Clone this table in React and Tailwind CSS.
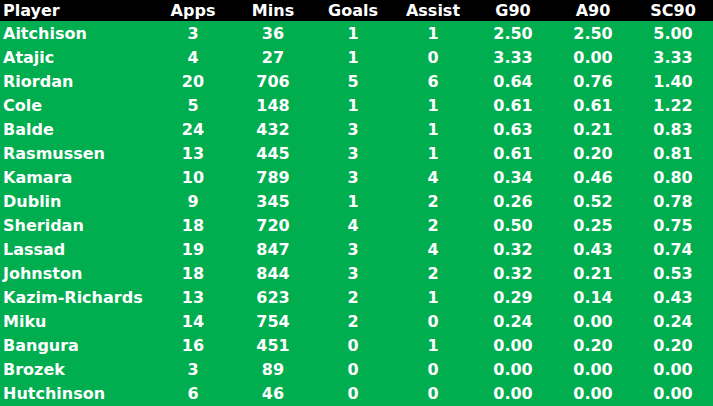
import React from 'react';

const rows = [
  ['Aitchison', 3, 36, 1, 1, '2.50', '2.50', '5.00'],
  ['Atajic', 4, 27, 1, 0, '3.33', '0.00', '3.33'],
  ['Riordan', 20, 706, 5, 6, '0.64', '0.76', '1.40'],
  ['Cole', 5, 148, 1, 1, '0.61', '0.61', '1.22'],
  ['Balde', 24, 432, 3, 1, '0.63', '0.21', '0.83'],
  ['Rasmussen', 13, 445, 3, 1, '0.61', '0.20', '0.81'],
  ['Kamara', 10, 789, 3, 4, '0.34', '0.46', '0.80'],
  ['Dublin', 9, 345, 1, 2, '0.26', '0.52', '0.78'],
  ['Sheridan', 18, 720, 4, 2, '0.50', '0.25', '0.75'],
  ['Lassad', 19, 847, 3, 4, '0.32', '0.43', '0.74'],
  ['Johnston', 18, 844, 3, 2, '0.32', '0.21', '0.53'],
  ['Kazim-Richards', 13, 623, 2, 1, '0.29', '0.14', '0.43'],
  ['Miku', 14, 754, 2, 0, '0.24', '0.00', '0.24'],
  ['Bangura', 16, 451, 0, 1, '0.00', '0.20', '0.20'],
  ['Brozek', 3, 89, 0, 0, '0.00', '0.00', '0.00'],
  ['Hutchinson', 6, 46, 0, 0, '0.00', '0.00', '0.00'],
];

const headers = ['Player', 'Apps', 'Mins', 'Goals', 'Assist', 'G90', 'A90', 'SC90'];

const Row = ({ cells, className }) => (
  <div className={`grid grid-cols-[153px_repeat(7,80px)] items-center ${className}`}>
    {cells.map((c, i) => (
      <div key={i} className={i === 0 ? 'pl-[3px] text-left' : 'text-center'}>
        {c}
      </div>
    ))}
  </div>
);

export default function App() {
  return (
    <div
      className="w-[713px] h-[406px] bg-[#00ad4f] text-white font-bold text-[16px] leading-none overflow-hidden"
      style={{ fontFamily: '"DejaVu Sans", sans-serif' }}
    >
      <Row cells={headers} className="h-[21px] bg-black" />
      {rows.map((r) => (
        <Row key={r[0]} cells={r} className="h-[24px] pt-[2px]" />
      ))}
    </div>
  );
}
